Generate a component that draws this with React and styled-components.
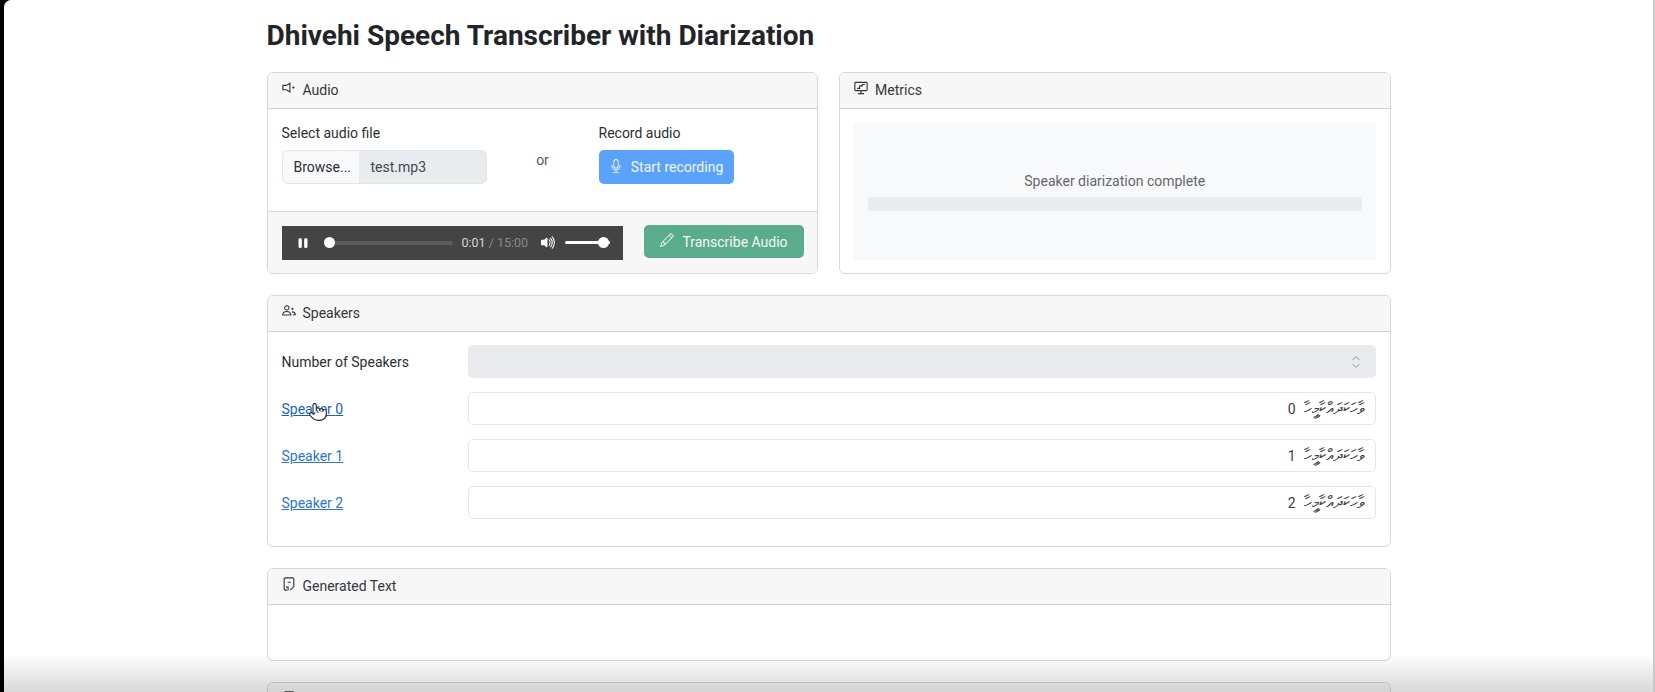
import React from 'react'
import styled, { createGlobalStyle } from 'styled-components'
import { BsMic, BsPauseFill, BsPencil, BsVolumeUpFill } from 'react-icons/bs'
import { Pointer } from 'lucide-react'

const GlobalStyle = createGlobalStyle`
	html, body {
		margin: 0;
		height: 692px;
		overflow: hidden;
		background: #000;
		font-family: Roboto, "Noto Sans", "DejaVu Sans", sans-serif;
		font-size: 14px;
		color: #2b2f33;
	}
	* {
		box-sizing: border-box;
	}
`

const Frame = styled.div`
	position: relative;
	height: 692px;
	margin-left: 4px;
	background: #fff;
	border-top-left-radius: 7px;
	border-right: 2px solid #c9c9c9;
	overflow: hidden;
`

const Page = styled.main`
	width: 1124px;
	margin: 0 auto;
	padding-top: 20px;
	display: flex;
	flex-direction: column;
	gap: 21px;
`

const Title = styled.h1`
	margin: 0;
	font-size: 28px;
	line-height: 31px;
	font-weight: 700;
	color: #212529;
`

const TwoColumns = styled.div`
	display: grid;
	grid-template-columns: 1fr 1fr;
	gap: 21px;
`

const Card = styled.section`
	border: 1px solid #d8d8d8;
	border-radius: 6px;
	background: #fff;
	display: flex;
	flex-direction: column;
	overflow: hidden;
	flex-shrink: 0;
`

const CardHeader = styled.header`
	height: 36px;
	flex-shrink: 0;
	display: flex;
	align-items: center;
	gap: 7px;
	padding: 0 14px 1px;
	background: #f7f7f7;
	border-bottom: 1px solid #d2d2d2;
	color: #33373b;

	svg {
		width: 14px;
		height: 14px;
		margin-top: -4px;
		flex-shrink: 0;
	}
`

const AudioBody = styled.div`
	flex: 1;
	display: grid;
	grid-template-columns: 205px 112px auto;
	padding: 14px 14px 27px;
`

const Field = styled.div`
	display: flex;
	flex-direction: column;
	align-items: flex-start;
	gap: 7px;
`

const Label = styled.div`
	line-height: 20px;
`

const Or = styled.div`
	padding-top: 27px;
	line-height: 20px;
	text-align: center;
	color: #55595d;
`

const FilePicker = styled.div`
	width: 100%;
	height: 34px;
	display: flex;
	border: 1px solid #e3e5e8;
	border-radius: 6px;
	overflow: hidden;
	background: #e9ecef;
	line-height: 32px;
`

const BrowseButton = styled.span`
	width: 76px;
	padding-left: 11px;
	background: #f8f9fa;
`

const FileName = styled.span`
	padding-left: 12px;
	color: #43474b;
`

const ActionButton = styled.button`
	height: ${({ $height }) => $height}px;
	width: ${({ $width }) => $width}px;
	display: flex;
	align-items: center;
	justify-content: center;
	gap: 8px;
	padding: 0;
	border: 0;
	border-radius: 5px;
	background: ${({ $color }) => $color};
	color: #f2f8f6;
	font: inherit;

	svg {
		width: 14px;
		height: 14px;
		margin-top: -3px;
	}
`

const TranscribeButton = styled(ActionButton)`
	margin-bottom: 2px;
`

const CardFooter = styled.footer`
	height: 62px;
	display: flex;
	align-items: center;
	justify-content: space-between;
	padding: 0 13px 0 14px;
	background: #f7f7f7;
	border-top: 1px solid #d8d8d8;
`

const Player = styled.div`
	width: 341px;
	height: 34px;
	display: flex;
	align-items: center;
	padding: 0 12px;
	background: #444;
	color: #d4d4d4;
	font-size: 12.5px;
`

const PlayerIcon = styled.span`
	display: flex;
	color: #fff;

	svg {
		width: ${({ $size }) => $size}px;
		height: ${({ $size }) => $size}px;
	}
`

const Track = styled.div`
	position: relative;
	height: ${({ $thick }) => ($thick ? 3 : 4)}px;
	width: ${({ $width }) => $width}px;
	margin-left: ${({ $offset }) => $offset}px;
	flex-shrink: 0;
	border-radius: 2px;
	background: ${({ $thick }) => ($thick ? '#fff' : '#5c5c5c')};
`

const Thumb = styled.div`
	position: absolute;
	top: 50%;
	left: ${({ $left }) => $left}px;
	width: 11px;
	height: 11px;
	margin-top: -5.5px;
	border-radius: 50%;
	background: #fff;
`

const Time = styled.div`
	margin: 0 12px 0 9px;
	white-space: nowrap;
`

const TimeTotal = styled.span`
	color: #8a8a8a;
`

const MetricsBody = styled.div`
	flex: 1;
	padding: 14px 14px 13px;
`

const MetricsPanel = styled.div`
	height: 100%;
	display: flex;
	flex-direction: column;
	justify-content: center;
	gap: 8px;
	padding: 1px 14px 0;
	background: #f8f9fa;
	text-align: center;
	color: #63676b;
`

const ProgressBar = styled.div`
	height: 14px;
	border-radius: 4px;
	background: #e9ecef;
`

const SpeakersBody = styled.div`
	display: grid;
	grid-template-columns: 186px 1fr;
	row-gap: 14px;
	align-items: center;
	padding: 13px 14px 27px;
`

const RowLabel = styled.div`
	line-height: 20px;
`

const SpeakerLink = styled.a`
	position: relative;
	justify-self: start;
	line-height: 20px;
	color: ${({ $active }) => ($active ? '#1b62bd' : '#2b76cf')};
	text-decoration: underline;
`

const Cursor = styled(Pointer)`
	position: absolute;
	left: 26px;
	top: 3px;
	width: 20px;
	height: 20px;
	fill: #fff;
	color: #333;
	stroke-width: 1.4;
`

const SelectBox = styled.div`
	height: 33px;
	display: flex;
	align-items: center;
	justify-content: flex-end;
	padding-right: 15px;
	border-radius: 5px;
	background: #e9ebee;
	color: #b4b7ba;
`

const NameField = styled.div`
	height: 33px;
	display: flex;
	align-items: center;
	gap: 8px;
	padding: 0 11px;
	border: 1px solid #e3e5e8;
	border-radius: 5px;
	background: #fff;
	color: #3a3e42;
`

const NameText = styled.span`
	font-size: 17px;
	line-height: 1;
`

const EmptyBody = styled.div`
	height: 55px;
`

const BottomShade = styled.div`
	position: absolute;
	left: -4px;
	right: 0;
	bottom: 0;
	height: 39px;
	background: linear-gradient(to bottom, rgba(0, 0, 0, 0), rgba(0, 0, 0, 0.15));
	pointer-events: none;
`

const SpeakerIcon = () => (
	<svg viewBox="0 0 16 16" fill="none" stroke="currentColor" strokeWidth="1.3">
		<path d="M1 5h4l4-2.5v10L5 10H1z" />
		<circle cx="13" cy="7.5" r="1.3" fill="currentColor" stroke="none" />
	</svg>
)

const MonitorIcon = () => (
	<svg viewBox="0 0 16 16" fill="none" stroke="currentColor" strokeWidth="1.3">
		<rect x="1" y="1.5" width="14" height="9.5" rx="1" />
		<path d="M8 11v3M4.5 14.5h7" />
		<path d="M3.5 8.5h3V5.5h3V4h3" />
	</svg>
)

const PeopleIcon = () => (
	<svg viewBox="0 0 16 16" fill="none" stroke="currentColor" strokeWidth="1.2">
		<circle cx="5.5" cy="4.5" r="2.5" />
		<path d="M.8 12.5c0-2.6 2-4 4.7-4s4.7 1.4 4.7 4z" />
		<circle cx="12" cy="5.5" r="1.3" fill="currentColor" stroke="none" />
		<path d="M11.5 9c2 0 3.5 1 3.7 3.2h-3" />
	</svg>
)

const NoteIcon = () => (
	<svg viewBox="0 0 16 16" fill="none" stroke="currentColor" strokeWidth="1.3">
		<path d="M6 15H4a1.5 1.5 0 0 1-1.5-1.5V2.5A1.5 1.5 0 0 1 4 1h8a1.5 1.5 0 0 1 1.5 1.5V11L9.5 15" />
		<path d="M6.5 6h3.5" />
		<path d="M4.5 11.5h2.5V15" />
	</svg>
)

const ChevronsIcon = () => (
	<svg width="10" height="14" viewBox="0 0 10 14" fill="none" stroke="currentColor" strokeWidth="1.1">
		<path d="M1.5 5 5 1.5 8.5 5M1.5 9 5 12.5 8.5 9" />
	</svg>
)

const speakerName = 'ވާހަކަދައްކާމީހާ'

const App = () => {
	const speakers = [0, 1, 2]

	return (
		<Frame>
			<GlobalStyle />
			<Page>
				<Title>Dhivehi Speech Transcriber with Diarization</Title>

				<TwoColumns>
					<Card>
						<CardHeader>
							<SpeakerIcon />
							Audio
						</CardHeader>
						<AudioBody>
							<Field>
								<Label>Select audio file</Label>
								<FilePicker>
									<BrowseButton>Browse...</BrowseButton>
									<FileName>test.mp3</FileName>
								</FilePicker>
							</Field>
							<Or>or</Or>
							<Field>
								<Label>Record audio</Label>
								<ActionButton $color="#5aa2fa" $width={135} $height={34}>
									<BsMic />
									Start recording
								</ActionButton>
							</Field>
						</AudioBody>
						<CardFooter>
							<Player>
								<PlayerIcon $size={18}>
									<BsPauseFill />
								</PlayerIcon>
								<Track $width={129} $offset={12}>
									<Thumb $left={0} />
								</Track>
								<Time>
									0:01 <TimeTotal>/ 15:00</TimeTotal>
								</Time>
								<PlayerIcon $size={17}>
									<BsVolumeUpFill />
								</PlayerIcon>
								<Track $thick $width={45} $offset={8}>
									<Thumb $left={33} />
								</Track>
							</Player>
							<TranscribeButton $color="#5bac8c" $width={160} $height={33}>
								<BsPencil />
								Transcribe Audio
							</TranscribeButton>
						</CardFooter>
					</Card>

					<Card>
						<CardHeader>
							<MonitorIcon />
							Metrics
						</CardHeader>
						<MetricsBody>
							<MetricsPanel>
								<div>Speaker diarization complete</div>
								<ProgressBar />
							</MetricsPanel>
						</MetricsBody>
					</Card>
				</TwoColumns>

				<Card>
					<CardHeader>
						<PeopleIcon />
						Speakers
					</CardHeader>
					<SpeakersBody>
						<RowLabel>Number of Speakers</RowLabel>
						<SelectBox>
							<ChevronsIcon />
						</SelectBox>
						{speakers.map((id) => (
							<React.Fragment key={id}>
								<SpeakerLink $active={id === 0}>
									Speaker {id}
									{id === 0 && <Cursor />}
								</SpeakerLink>
								<NameField dir="rtl">
									<NameText>{speakerName}</NameText>
									<span>{id}</span>
								</NameField>
							</React.Fragment>
						))}
					</SpeakersBody>
				</Card>

				<Card>
					<CardHeader>
						<NoteIcon />
						Generated Text
					</CardHeader>
					<EmptyBody />
				</Card>

				<Card>
					<CardHeader>
						<NoteIcon />
					</CardHeader>
				</Card>
			</Page>
			<BottomShade />
		</Frame>
	)
}

export default App
